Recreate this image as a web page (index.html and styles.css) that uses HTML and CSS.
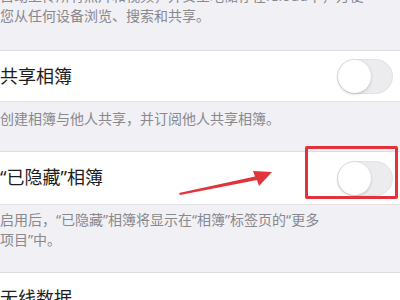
FILE: index.html
```html
<!DOCTYPE html>
<html lang="zh-CN">
<head>
  <meta charset="UTF-8">
  <meta name="viewport" content="width=device-width, initial-scale=1.0">
  <title>照片</title>
  <link rel="stylesheet" href="styles.css">
</head>
<body>
  <div class="settings">
    <p class="footer first">自动上传所有照片和视频，并安全地储存在iCloud中，方便您从任何设备浏览、搜索和共享。</p>

    <div class="row">
      <span class="label">共享相簿</span>
      <span class="toggle"><span class="knob"></span></span>
    </div>
    <p class="footer">创建相簿与他人共享，并订阅他人共享相簿。</p>

    <div class="row tall">
      <span class="label">“已隐藏”相簿</span>
      <span class="toggle"><span class="knob"></span></span>
      <span class="mark-box"></span>
      <svg class="mark-arrow" width="100" height="30" viewBox="0 0 100 30">
        <polygon points="0,25 76,8.5 74,3 93,4 80,18 78,12 1,27" fill="#e2333a"/>
      </svg>
    </div>
    <p class="footer wrap">启用后，“已隐藏”相簿将显示在“相簿”标签页的“更多项目”中。</p>

    <div class="row">
      <span class="label">无线数据</span>
      <svg class="chevron" width="9" height="15" viewBox="0 0 9 15">
        <path d="M1.5 1.5 L7.5 7.5 L1.5 13.5" fill="none" stroke="#c4c4c9" stroke-width="2"/>
      </svg>
    </div>
  </div>
</body>
</html>
```

FILE: styles.css
```css
body {
  margin: 0;
  background-color: #f0f0f5;
  font-family: "Noto Sans", "Noto Sans CJK SC", sans-serif;
  overflow: hidden;
}

.settings {
  width: 400px;
}

.footer {
  margin: 0;
  padding: 7px 48px 22px 0;
  font-size: 14px;
  line-height: 20px;
  color: #88888d;
}

.footer.first {
  margin-top: -14px;
  padding: 0 28px 24px 0;
}

.footer.wrap {
  padding: 5px 72px 22px 0;
}

.row {
  position: relative;
  display: flex;
  align-items: center;
  justify-content: space-between;
  height: 50px;
  padding-right: 7px;
  background-color: #ffffff;
  border-top: 1px solid #dddde1;
  border-bottom: 1px solid #e3e3e7;
}

.row.tall {
  height: 52px;
}

.label {
  font-size: 18px;
  line-height: 24px;
  color: #1e1e20;
}

.row.tall .label {
  margin-top: -3px;
}

.toggle {
  display: flex;
  align-items: center;
  width: 56px;
  height: 35px;
  box-sizing: border-box;
  border: 1px solid #e2e2e4;
  border-radius: 18px;
  background-color: #ececee;
}

.knob {
  width: 33px;
  height: 33px;
  border-radius: 50%;
  background-color: #ffffff;
  box-shadow: 0 1px 3px rgba(0, 0, 0, 0.2);
}

.mark-box {
  position: absolute;
  left: 305px;
  top: -6px;
  width: 87px;
  height: 47px;
  border: 3px solid #e2333a;
  border-radius: 2px;
}

.mark-arrow {
  position: absolute;
  left: 179px;
  top: 16px;
}

.chevron {
  margin-top: 20px;
  margin-right: 2px;
}
```
